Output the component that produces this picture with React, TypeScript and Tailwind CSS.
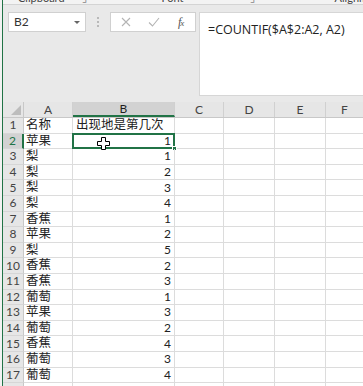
import React from "react";

const ROWS: [string, string][] = [
  ["名称", "出现地是第几次"],
  ["苹果", "1"],
  ["梨", "1"],
  ["梨", "2"],
  ["梨", "3"],
  ["梨", "4"],
  ["香蕉", "1"],
  ["苹果", "2"],
  ["梨", "5"],
  ["香蕉", "2"],
  ["香蕉", "3"],
  ["葡萄", "1"],
  ["苹果", "3"],
  ["葡萄", "2"],
  ["香蕉", "4"],
  ["葡萄", "3"],
  ["葡萄", "4"],
  ["", ""],
];

const FONT = { fontFamily: '"Lato", "Noto Sans CJK SC", sans-serif' };

function MoveCursor() {
  return (
    <svg width="13" height="13" viewBox="0 0 13 13">
      <path
        d="M4.5 0.5h4v4h4v4h-4v4h-4v-4h-4v-4h4z"
        fill="#fff"
        stroke="#000"
        strokeWidth="1"
      />
    </svg>
  );
}

export default function App() {
  return (
    <div className="w-[363px] h-[386px] overflow-hidden flex bg-[#e9e9e9] text-[#222]" style={FONT}>
      {/* window edge */}
      <div className="w-[2px] bg-[#f2f2f2]" />
      <div className="w-[1px] bg-[#217346]" />

      <div className="flex-1 flex flex-col min-w-0">
        {/* ribbon bottom */}
        <div className="h-[5px] shrink-0 overflow-hidden flex items-end border-b border-[#d4d4d4] bg-[#f3f3f3] text-[11px] leading-[12px] text-[#444] whitespace-nowrap">
          <span className="ml-[15px]">Clipboard</span>
          <span className="ml-[17px] text-[#888]">⌟</span>
          <span className="ml-[75px]">Font</span>
          <span className="ml-[66px] text-[#888]">⌟</span>
          <span className="ml-[80px]">Alignm</span>
        </div>

        {/* formula bar */}
        <div className="shrink-0 flex items-start pt-[7px] pb-[6px]">
          <div className="ml-[5px] w-[78px] h-[20px] bg-white border border-[#d0d0d0] flex items-center justify-between pl-[5px] pr-[5px]">
            <span className="text-[12px] text-[#333]">B2</span>
            <span className="w-0 h-0 border-l-[3px] border-r-[3px] border-t-[3px] border-l-transparent border-r-transparent border-t-[#666]" />
          </div>
          <div className="w-[24px] h-[20px] flex flex-col items-center justify-center gap-[2px]">
            <span className="w-[2px] h-[2px] rounded-full bg-[#a8a8a8]" />
            <span className="w-[2px] h-[2px] rounded-full bg-[#a8a8a8]" />
            <span className="w-[2px] h-[2px] rounded-full bg-[#a8a8a8]" />
          </div>
          <div className="w-[86px] h-[20px] bg-white border border-[#d0d0d0] flex items-center">
            <svg width="10" height="10" viewBox="0 0 10 10" className="ml-[10px]">
              <path d="M1 1l8 8M9 1l-8 8" stroke="#b4b4b4" strokeWidth="1.1" fill="none" />
            </svg>
            <svg width="12" height="10" viewBox="0 0 12 10" className="ml-[17px]">
              <path d="M1 5.5l3.5 3.5 6.5-8" stroke="#b4b4b4" strokeWidth="1.1" fill="none" />
            </svg>
            <span
              className="ml-[18px] text-[12px] italic text-[#555] tracking-[-1px]"
              style={{ fontFamily: '"Liberation Serif", serif' }}
            >
              f<span className="text-[9px]">x</span>
            </span>
          </div>
          <div className="ml-[3px] flex-1 h-[84px] bg-white border border-[#d6d6d6] border-r-0 pl-[8px] pt-[3px]">
            <span className="text-[12.5px] text-[#222]" style={{ fontFamily: '"Open Sans", sans-serif' }}>
              =COUNTIF($A$2:A2, A2)
            </span>
          </div>
        </div>

        {/* column headers */}
        <div className="shrink-0 grid grid-cols-[21px_49px_102px_49px_51px_51px_1fr] h-[16px] bg-[#e6e6e6] text-[12px] leading-none text-[#444] border-b border-[#c8c8c8]">
          <div className="relative border-r border-[#c8c8c8]">
            <svg width="10" height="10" viewBox="0 0 10 10" className="absolute right-[2px] bottom-[2px]">
              <path d="M10 0v10h-10z" fill="#bdbdbd" />
            </svg>
          </div>
          <div className="flex items-center justify-center border-r border-[#d0d0d0]">A</div>
          <div className="flex items-center justify-center border-r border-[#d0d0d0] bg-[#d2d2d2] border-b-2 border-b-[#217346] text-[#1f1f1f]">B</div>
          <div className="flex items-center justify-center border-r border-[#d0d0d0]">C</div>
          <div className="flex items-center justify-center border-r border-[#d0d0d0]">D</div>
          <div className="flex items-center justify-center border-r border-[#d0d0d0]">E</div>
          <div className="flex items-center justify-center">F</div>
        </div>

        {/* rows */}
        {ROWS.map(([name, count], i) => {
          const row = i + 1;
          const active = row === 2;
          return (
            <div key={row} className="grid grid-cols-[21px_49px_102px_49px_51px_51px_1fr] h-[15.6px] shrink-0 bg-white text-[12.5px] leading-none">
              <div
                className={`flex items-center justify-center border-b border-[#d6d6d6] text-[12px] ${
                  active
                    ? "bg-[#d2d2d2] border-r-2 border-r-[#217346] text-[#217346]"
                    : "bg-[#e6e6e6] border-r border-r-[#c8c8c8] text-[#444]"
                }`}
              >
                {row}
              </div>
              <div className="flex items-center pl-[2px] border-r border-b border-[#dcdcdc] whitespace-nowrap">{name}</div>
              <div
                className={`relative flex items-center border-r border-b border-[#dcdcdc] whitespace-nowrap ${
                  row === 1 ? "pl-[3px]" : "justify-end pr-[3px] text-[12px]"
                }`}
              >
                {count}
                {active && (
                  <>
                    <div className="absolute -left-[1px] -top-[1px] -right-[1px] -bottom-[1px] border-2 border-[#217346]" />
                    <div className="absolute -right-[3px] -bottom-[3px] w-[5px] h-[5px] bg-[#217346] border border-white" />
                    <div className="absolute left-[24px] top-[3px]">
                      <MoveCursor />
                    </div>
                  </>
                )}
              </div>
              <div className="border-r border-b border-[#dcdcdc]" />
              <div className="border-r border-b border-[#dcdcdc]" />
              <div className="border-r border-b border-[#dcdcdc]" />
              <div className="border-b border-[#dcdcdc]" />
            </div>
          );
        })}
      </div>
    </div>
  );
}
